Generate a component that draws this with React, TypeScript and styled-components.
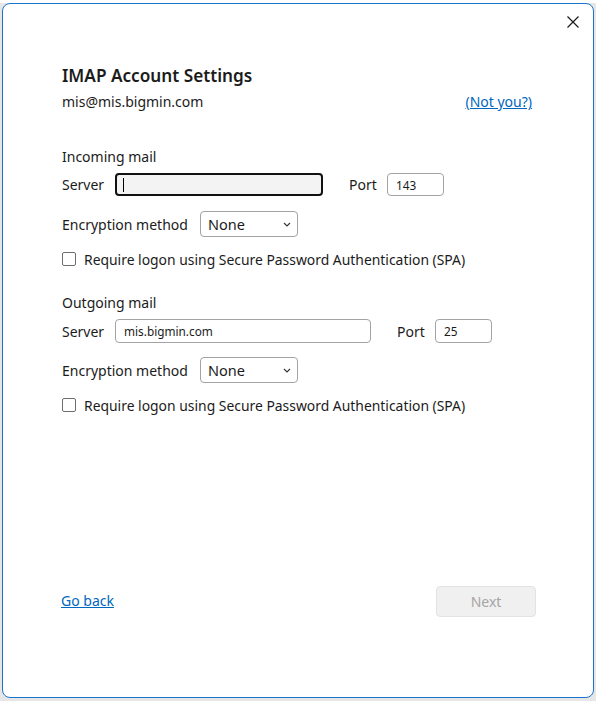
import * as React from "react";
import styled, { createGlobalStyle } from "styled-components";

const GlobalStyle = createGlobalStyle`
    html, body {
        margin: 0;
        padding: 0;
        background: #e6e6e6;
    }
    body {
        font-family: "Noto Sans", "Open Sans", sans-serif;
        color: #1b1b1b;
    }
`

const Backdrop = styled.div`
    height: 701px;
    box-sizing: border-box;
    padding: 3px 2px 3px 2px;
    background: linear-gradient(#ffffff 0, #ffffff 3px, #e6e6e6 3px);
`
const Window = styled.div`
    height: 100%;
    box-sizing: border-box;
    display: flex;
    flex-direction: column;
    background: #ffffff;
    border: 1px solid #1a74cf;
    border-radius: 8px;
`
const TitleBar = styled.div`
    height: 36px;
    display: flex;
    align-items: center;
    justify-content: flex-end;
    padding-right: 12px;
`
const CloseButton = styled.button`
    width: 16px;
    height: 16px;
    padding: 0;
    border: none;
    background: none;
    display: flex;
    align-items: center;
    justify-content: center;
    cursor: pointer;
`
const Content = styled.div`
    flex: 1;
    display: flex;
    flex-direction: column;
    padding: 24px 61px 0 59px;
`
const Title = styled.h1`
    margin: 0;
    font-size: 17.2px;
    font-weight: 600;
    line-height: 24px;
    color: #1b1b1b;
`
const AccountRow = styled.div`
    display: flex;
    justify-content: space-between;
    margin-top: 4px;
    font-size: 14px;
    line-height: 20px;
`
const Link = styled.a`
    color: #0067c0;
    text-decoration: underline;
    cursor: pointer;
`
const SectionTitle = styled.div<{ $top: number }>`
    margin-top: ${({ $top }) => $top}px;
    font-size: 14px;
    line-height: 20px;
`
const Row = styled.div<{ $top: number; $height: number }>`
    display: flex;
    align-items: center;
    height: ${({ $height }) => $height}px;
    margin-top: ${({ $top }) => $top}px;
    font-size: 14px;
`
const Label = styled.span<{ $width?: number; $gap?: number }>`
    flex: none;
    width: ${({ $width }) => ($width ? `${$width}px` : "auto")};
    margin-right: ${({ $width }) => ($width ? 0 : 12)}px;
    margin-left: ${({ $gap }) => $gap || 0}px;
    white-space: nowrap;
`
const Field = styled.div<{ $width: number; $focused?: boolean }>`
    width: ${({ $width }) => $width}px;
    height: 100%;
    box-sizing: border-box;
    display: flex;
    align-items: center;
    padding-left: ${({ $focused }) => ($focused ? 6 : 8)}px;
    border-radius: 4px;
    font-size: 11.8px;
    border: ${({ $focused }) => ($focused ? "2px solid #111111" : "1px solid #a3a3a3")};
    background: ${({ $focused }) => ($focused ? "#f3f3f3" : "#ffffff")};
`
const Caret = styled.span`
    width: 1px;
    height: 14px;
    background: #000000;
`
const Select = styled.div`
    width: 98px;
    height: 100%;
    box-sizing: border-box;
    display: flex;
    align-items: center;
    justify-content: space-between;
    padding: 0 6px 0 7px;
    border: 1px solid #a3a3a3;
    border-radius: 4px;
    font-size: 14.5px;
`
const CheckRow = styled.label<{ $top: number }>`
    display: flex;
    align-items: center;
    gap: 8px;
    height: 20px;
    margin-top: ${({ $top }) => $top}px;
    font-size: 13.9px;
`
const Box = styled.span`
    width: 14px;
    height: 14px;
    box-sizing: border-box;
    border: 1px solid #6d6d6d;
    border-radius: 2px;
`
const Footer = styled.div`
    display: flex;
    align-items: center;
    justify-content: space-between;
    padding: 0 57px 80px 58px;
`
const NextButton = styled.button`
    width: 100px;
    height: 31px;
    border: 1px solid #e3e3e3;
    border-radius: 4px;
    background: #f0f0f0;
    color: #a5a5a5;
    font-family: inherit;
    font-size: 14px;
`
const FooterLink = styled(Link)`
    font-size: 14px;
    margin-top: -2px;
`

const Chevron = () => (
    <svg width="8" height="5" viewBox="0 0 8 5">
        <path d="M1 1 L4 4 L7 1" fill="none" stroke="#333" strokeWidth="1.1" />
    </svg>
)

interface MailSectionProps {
    title: string;
    top: number;
    server: string;
    serverWidth: number;
    port: string;
    focused?: boolean;
}

function MailSection({ title, top, server, serverWidth, port, focused }: MailSectionProps) {
    return (
        <>
            <SectionTitle $top={top}>{title}</SectionTitle>
            <Row $top={6} $height={focused ? 23 : 24}>
                <Label $width={53}>Server</Label>
                <Field $width={serverWidth} $focused={focused}>
                    {focused ? <Caret /> : server}
                </Field>
                <Label $width={38} $gap={26}>Port</Label>
                <Field $width={57}>{port}</Field>
            </Row>
            <Row $top={focused ? 15 : 14} $height={26}>
                <Label>Encryption method</Label>
                <Select>
                    <span>None</span>
                    <Chevron />
                </Select>
            </Row>
            <CheckRow $top={12}>
                <Box />
                Require logon using Secure Password Authentication (SPA)
            </CheckRow>
        </>
    );
}

export default function App() {
    return (
        <>
            <GlobalStyle />
            <Backdrop>
                <Window>
                    <TitleBar>
                        <CloseButton aria-label="Close">
                            <svg width="12" height="12" viewBox="0 0 12 12">
                                <path d="M0.5 0.5 L11.5 11.5 M11.5 0.5 L0.5 11.5" stroke="#1b1b1b" strokeWidth="1.2" />
                            </svg>
                        </CloseButton>
                    </TitleBar>
                    <Content>
                        <Title>IMAP Account Settings</Title>
                        <AccountRow>
                            <span>mis@mis.bigmin.com</span>
                            <Link>(Not you?)</Link>
                        </AccountRow>
                        <MailSection title="Incoming mail" top={35} server="" serverWidth={208} port="143" focused />
                        <MailSection title="Outgoing mail" top={24} server="mis.bigmin.com" serverWidth={256} port="25" />
                    </Content>
                    <Footer>
                        <FooterLink>Go back</FooterLink>
                        <NextButton disabled>Next</NextButton>
                    </Footer>
                </Window>
            </Backdrop>
        </>
    );
}
